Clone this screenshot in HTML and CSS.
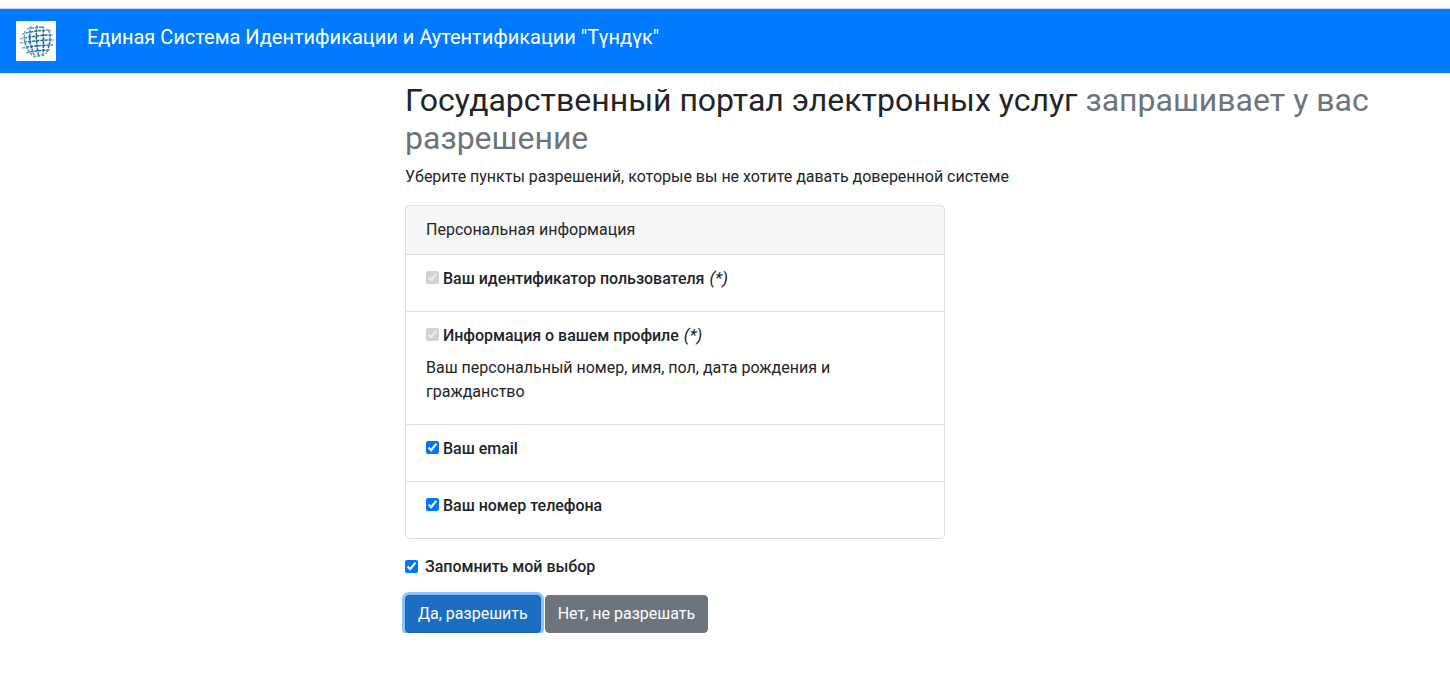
FILE: index.html
```html
<!DOCTYPE html>
<html lang="ru">
<head>
<meta charset="utf-8">
<title>Түндүк</title>
<link rel="stylesheet" href="styles.css">
</head>
<body>
<nav class="navbar">
  <span class="logo">
    <svg width="40" height="40" viewBox="0 0 40 40">
      <defs>
        <radialGradient id="fade" cx="55%" cy="50%" r="50%">
          <stop offset="0" stop-color="#fff"/>
          <stop offset=".55" stop-color="#fff"/>
          <stop offset="1" stop-color="#777"/>
        </radialGradient>
        <mask id="globe"><circle cx="21" cy="20" r="18" fill="url(#fade)"/></mask>
        <filter id="soft"><feGaussianBlur stdDeviation=".35"/></filter>
      </defs>
      <g fill="none" stroke="#17659f" mask="url(#globe)" filter="url(#soft)">
        <g stroke-width="1.5" stroke-dasharray="3.2 .9">
          <path d="M11 8q8 -2 17 -2"/>
          <path d="M6 13q15 -4 29 -4"/>
          <path d="M4 18q17 -4 33 -4"/>
          <path d="M4 22q17 -3 34 -3"/>
          <path d="M6 27q15 -3 31 -3"/>
          <path d="M10 32q13 -3 24 -3"/>
          <path d="M17 36q8 -2 12 -2"/>
        </g>
        <g stroke-width="1.6" stroke-dasharray="3 .9">
          <path d="M9 10q-3 13 7 24"/>
          <path d="M15 5q-4 14 4 31"/>
          <path d="M21 4q-2 15 2 32"/>
          <path d="M27 5q1 14 0 30"/>
          <path d="M33 9q3 12 -3 24"/>
        </g>
      </g>
    </svg>
  </span>
  <a class="brand" href="#">Единая Система Идентификации и Аутентификации "Түндүк"</a>
</nav>
<main class="content">
  <h1 class="title">Государственный портал электронных услуг <small class="muted">запрашивает у вас разрешение</small></h1>
  <p class="hint">Уберите пункты разрешений, которые вы не хотите давать доверенной системе</p>
  <form>
    <section class="card">
      <div class="card-header">Персональная информация</div>
      <ul class="list">
        <li class="item">
          <label class="check"><input type="checkbox" checked disabled><strong>Ваш идентификатор пользователя</strong> <em>(*)</em></label>
        </li>
        <li class="item">
          <label class="check"><input type="checkbox" checked disabled><strong>Информация о вашем профиле</strong> <em>(*)</em></label>
          <p class="desc">Ваш персональный номер, имя, пол, дата рождения и гражданство</p>
        </li>
        <li class="item">
          <label class="check"><input type="checkbox" checked><strong>Ваш email</strong></label>
        </li>
        <li class="item">
          <label class="check"><input type="checkbox" checked><strong>Ваш номер телефона</strong></label>
        </li>
      </ul>
    </section>
    <label class="remember"><input type="checkbox" checked><strong>Запомнить мой выбор</strong></label>
    <div class="actions">
      <span class="ring"><button type="button" class="btn btn-primary">Да, разрешить</button></span>
      <button type="button" class="btn btn-secondary">Нет, не разрешать</button>
    </div>
  </form>
</main>
</body>
</html>
```
FILE: styles.css
```css
* { box-sizing: border-box; }
html, body { margin: 0; padding: 0; }
body {
  font-family: Roboto, "Liberation Sans", sans-serif;
  font-size: 16px;
  line-height: 24px;
  color: #212529;
  background: #fff;
  padding-top: 8px;
}
.navbar {
  display: flex;
  align-items: center;
  height: 65px;
  padding: 0 16px;
  background: #007bff;
  border-top: 1px solid #ced4da;
}
.logo {
  display: block;
  width: 40px;
  height: 40px;
  background: #fff;
  flex: none;
}
.logo svg { display: block; }
.brand {
  margin-left: 31px;
  margin-top: -8px;
  color: #fff;
  font-size: 20px;
  line-height: 30px;
  letter-spacing: -0.01px;
  text-decoration: none;
}
.content {
  margin-left: 405px;
  width: 980px;
}
.title {
  margin: 8px 0 7px;
  font-size: 32px;
  line-height: 38.4px;
  font-weight: 400;
}
.muted {
  font-size: 32px;
  color: #6c757d;
}
.hint {
  margin: 0 0 16px;
  letter-spacing: -0.01px;
}
.card {
  width: 540px;
  border: 1px solid rgba(0,0,0,.125);
  border-radius: 4px;
  margin-bottom: 16px;
}
.card-header {
  padding: 12px 20px;
  height: 49px;
  background: rgba(0,0,0,.03);
  border-bottom: 1px solid rgba(0,0,0,.125);
}
.list {
  list-style: none;
  margin: 0;
  padding: 0;
}
.item {
  padding: 12px 20px 20px;
  border-bottom: 1px solid rgba(0,0,0,.125);
}
.item:last-child { border-bottom: 0; }
.check, .remember {
  display: block;
}
.check strong, .remember strong {
  font-weight: 500;
  letter-spacing: -0.03px;
}
.check em {
  margin-left: 1px;
  font-size: 17px;
  line-height: 20px;
}
.check input, .remember input {
  width: 13px;
  height: 13px;
  margin: 0 4px 0 0;
}
.remember input { margin-right: 7px; vertical-align: -1px; }
.desc {
  margin: 8px 0 0;
}
.remember { margin-bottom: 16px; }
.actions {
  display: flex;
  gap: 4px;
}
.ring {
  display: flex;
  margin: -3px;
  padding: 3px;
  background: #8dc3fa;
  border-radius: 7px;
}
.btn {
  font: inherit;
  height: 38px;
  padding: 6px 12px;
  border: 1px solid transparent;
  border-radius: 4px;
  color: #fff;
}
.btn-primary {
  background: #1b6ec2;
  border-color: #1861ac;
}
.btn-secondary {
  background: #6c757d;
  border-color: #6c757d;
}
```
